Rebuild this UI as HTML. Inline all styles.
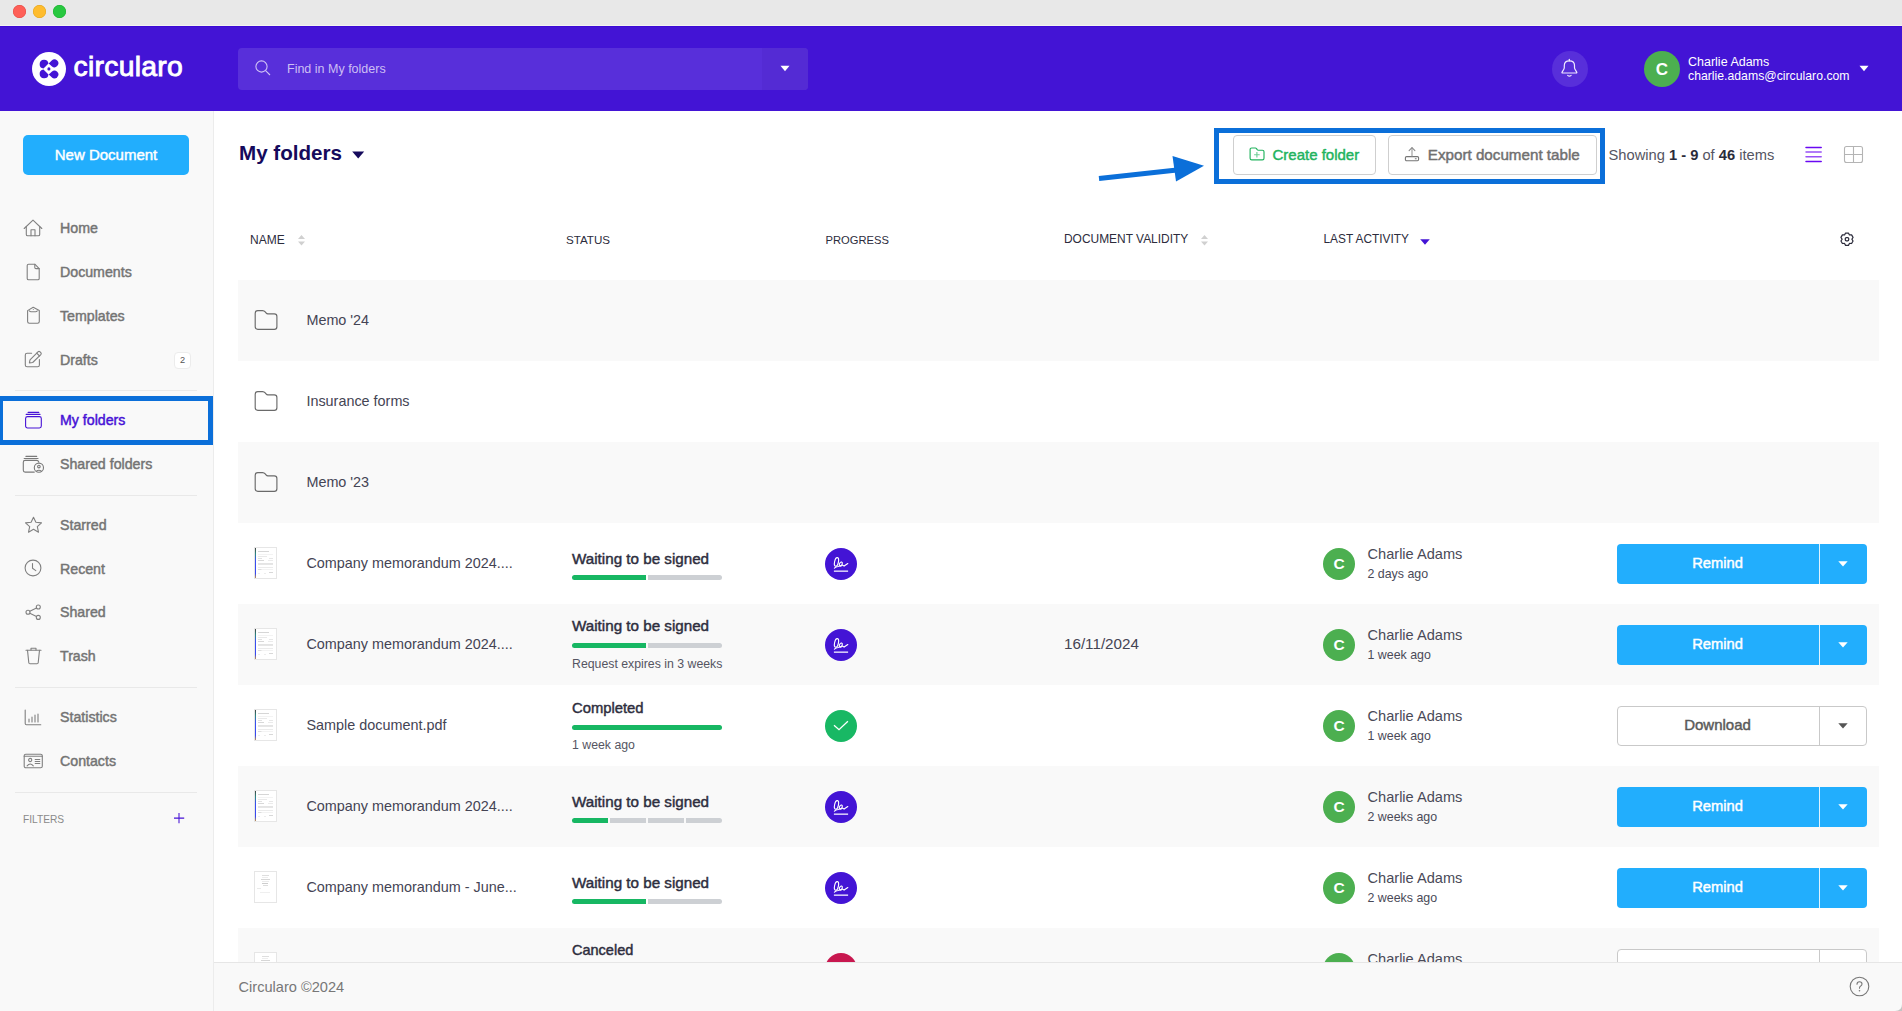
<!DOCTYPE html>
<html><head><meta charset="utf-8"><title>Circularo</title><style>*{margin:0;padding:0}
html,body{width:1902px;height:1011px;overflow:hidden;background:#fff;font-family:"Liberation Sans",sans-serif}
.r{position:absolute;display:block}
.t{position:absolute;white-space:nowrap}
b{font-weight:700}</style></head><body>
<div class="r" style="left:214px;top:111px;width:1688px;height:851px;background:#fff"></div>
<div class="t " style="left:239px;top:142.56px;font-size:20.6px;line-height:20.6px;color:#150a5c;font-weight:700;">My folders</div>
<svg class="r" style="left:352px;top:150.6px;" width="12.5" height="8" viewBox="0 0 12.5 8"><path d="M0.2 0.4 L12.2 0.4 L6.2 7.4 Z" fill="#150a5c"/></svg>
<svg class="r" style="left:1095px;top:150px;" width="115" height="36" viewBox="0 0 115 36"><line x1="4" y1="28.5" x2="82" y2="20" stroke="#0b6fd9" stroke-width="5"/><path d="M77.5 6 L109 15.7 L81 31.5 Z" fill="#0b6fd9"/></svg>
<div class="r" style="left:1233px;top:135px;width:143px;height:40px;border:1px solid #cfcfcf;border-radius:4px;box-sizing:border-box;background:#fff"></div>
<svg class="r" style="left:1249px;top:147px;" width="16" height="15" viewBox="0 0 16 15"><g fill="none" stroke="#22b35e" stroke-width="1.15" stroke-linejoin="round"><path d="M1.1 2.6 Q1.1 1 2.7 1 H6.4 Q7 1 7.5 1.6 L8 2.4 Q8.6 3.2 9.3 3.2 H13.4 Q15 3.2 15 4.8 V11.2 Q15 12.8 13.4 12.8 H2.7 Q1.1 12.8 1.1 11.2 Z"/><path d="M7.9 4.9 V10.5 M5.1 7.7 H10.7" stroke="#6fcf98"/></g></svg>
<div class="t " style="left:1272.5px;top:146.90px;font-size:15px;line-height:15px;color:#22b35e;font-weight:400;-webkit-text-stroke:0.45px #22b35e;">Create folder</div>
<div class="r" style="left:1388px;top:135px;width:209px;height:40px;border:1px solid #cfcfcf;border-radius:4px;box-sizing:border-box;background:#fff"></div>
<svg class="r" style="left:1403px;top:146px;" width="17" height="16" viewBox="0 0 17 16"><g fill="none" stroke="#757575" stroke-width="1.1" stroke-linejoin="round" stroke-linecap="round"><rect x="2.4" y="10.6" width="13.2" height="4.2" rx="1.2"/><path d="M9 1.8 V10" stroke="#9a9a9a"/><path d="M6.1 4.6 L9 1.7 L11.9 4.6" stroke="#8a8a8a"/><path d="M12.3 12.7 H13.2"/></g></svg>
<div class="t " style="left:1427.8px;top:146.73px;font-size:15.2px;line-height:15.2px;color:#707070;font-weight:400;-webkit-text-stroke:0.45px #707070;">Export document table</div>
<div class="r" style="left:1214px;top:128px;width:391px;height:56px;border:5px solid #0b6fd9;box-sizing:border-box"></div>
<div class="t " style="left:1608.5px;top:147.96px;font-size:14.7px;line-height:14.7px;color:#555562;font-weight:400;">Showing <b style="color:#2b2b3a">1 - 9</b> of <b style="color:#2b2b3a">46</b> items</div>
<svg class="r" style="left:1804px;top:145px;" width="19" height="19" viewBox="0 0 19 19"><g stroke-width="1.5" stroke-linecap="round"><path d="M2 2.4 H17.2 M2 16.6 H17.2" stroke="#6a08f2"/><path d="M2 7.1 H17.2 M2 11.8 H17.2" stroke="#9850f6"/></g></svg>
<svg class="r" style="left:1843px;top:145px;" width="21" height="19" viewBox="0 0 21 19"><g fill="none" stroke="#b4b4b4" stroke-width="1.1"><rect x="1.5" y="1.5" width="18" height="16" rx="2"/><path d="M10.5 1.5 V17.5 M1.5 9.5 H19.5"/></g></svg>
<div class="t " style="left:250px;top:234.04px;font-size:12px;line-height:12px;color:#2c2c3c;font-weight:400;">NAME</div>
<div class="t " style="left:566px;top:234.38px;font-size:11.6px;line-height:11.6px;color:#2c2c3c;font-weight:400;">STATUS</div>
<div class="t " style="left:825.5px;top:234.72px;font-size:11.2px;line-height:11.2px;color:#2c2c3c;font-weight:400;">PROGRESS</div>
<div class="t " style="left:1064px;top:234.08px;font-size:11.95px;line-height:11.95px;color:#2c2c3c;font-weight:400;">DOCUMENT VALIDITY</div>
<div class="t " style="left:1323.5px;top:234.17px;font-size:11.85px;line-height:11.85px;color:#2c2c3c;font-weight:400;">LAST ACTIVITY</div>
<svg class="r" style="left:296.5px;top:233.5px;" width="9" height="13" viewBox="0 0 9 13"><path d="M1 5 L4.5 1 L8 5 Z M1 7.5 L8 7.5 L4.5 11.5 Z" fill="#d0d0d0"/></svg>
<svg class="r" style="left:1199.5px;top:233.5px;" width="9" height="13" viewBox="0 0 9 13"><path d="M1 5 L4.5 1 L8 5 Z M1 7.5 L8 7.5 L4.5 11.5 Z" fill="#d0d0d0"/></svg>
<svg class="r" style="left:1420px;top:239px;" width="10" height="6" viewBox="0 0 10 6"><path d="M0.2 0.3 L9.8 0.3 L5 5.8 Z" fill="#4314d5"/></svg>
<svg class="r" style="left:1840px;top:232px;" width="14" height="15" viewBox="0 0 14 15"><g fill="none" stroke="#2c2c3c" stroke-width="1.25" stroke-linejoin="round"><path d="M4.55 2.96 L5.58 1.06 L8.42 1.06 L9.45 2.96 L11.61 2.90 L13.02 5.36 L11.90 7.20 L13.02 9.04 L11.61 11.50 L9.45 11.44 L8.42 13.34 L5.58 13.34 L4.55 11.44 L2.39 11.50 L0.98 9.04 L2.10 7.20 L0.98 5.36 L2.39 2.90 Z"/><rect x="5.3" y="5.5" width="3.4" height="3.4" rx="1.1"/></g></svg>
<div class="r" style="left:238px;top:280px;width:1641px;height:81px;background:#f9f9f9"></div>
<div class="r" style="left:238px;top:442px;width:1641px;height:81px;background:#f9f9f9"></div>
<div class="r" style="left:238px;top:604px;width:1641px;height:81px;background:#f9f9f9"></div>
<div class="r" style="left:238px;top:766px;width:1641px;height:81px;background:#f9f9f9"></div>
<div class="r" style="left:238px;top:928px;width:1641px;height:81px;background:#f9f9f9"></div>
<svg class="r" style="left:254px;top:309.0px;" width="24" height="22" viewBox="0 0 24 22"><path d="M1.2 4.2 Q1.2 1.6 3.8 1.6 H8.6 Q10.2 1.6 11.2 2.9 L12 3.9 Q12.8 4.9 14 4.9 H20.3 Q22.9 4.9 22.9 7.5 V17.7 Q22.9 20.3 20.3 20.3 H3.8 Q1.2 20.3 1.2 17.7 Z" fill="none" stroke="#6a6a6a" stroke-width="1.15" stroke-linejoin="round"/></svg>
<div class="t " style="left:306.4px;top:313.11px;font-size:14.4px;line-height:14.4px;color:#444454;font-weight:400;">Memo '24</div>
<svg class="r" style="left:254px;top:390.0px;" width="24" height="22" viewBox="0 0 24 22"><path d="M1.2 4.2 Q1.2 1.6 3.8 1.6 H8.6 Q10.2 1.6 11.2 2.9 L12 3.9 Q12.8 4.9 14 4.9 H20.3 Q22.9 4.9 22.9 7.5 V17.7 Q22.9 20.3 20.3 20.3 H3.8 Q1.2 20.3 1.2 17.7 Z" fill="none" stroke="#6a6a6a" stroke-width="1.15" stroke-linejoin="round"/></svg>
<div class="t " style="left:306.4px;top:394.11px;font-size:14.4px;line-height:14.4px;color:#444454;font-weight:400;">Insurance forms</div>
<svg class="r" style="left:254px;top:471.0px;" width="24" height="22" viewBox="0 0 24 22"><path d="M1.2 4.2 Q1.2 1.6 3.8 1.6 H8.6 Q10.2 1.6 11.2 2.9 L12 3.9 Q12.8 4.9 14 4.9 H20.3 Q22.9 4.9 22.9 7.5 V17.7 Q22.9 20.3 20.3 20.3 H3.8 Q1.2 20.3 1.2 17.7 Z" fill="none" stroke="#6a6a6a" stroke-width="1.15" stroke-linejoin="round"/></svg>
<div class="t " style="left:306.4px;top:475.11px;font-size:14.4px;line-height:14.4px;color:#444454;font-weight:400;">Memo '23</div>
<div class="r" style="left:254px;top:547.0px;width:23px;height:32px;background:#fff;border:1px solid #e6e6e6;box-sizing:border-box"></div>
<div class="r" style="left:254.6px;top:548.0px;width:1.1px;height:30px;background:linear-gradient(#444,#2a8a80 20%,#3850f0 40%,#3848f0 85%,#c09050)"></div>
<div class="r" style="left:258px;top:550.5px;width:11px;height:0.9px;background:#c4c4c4;opacity:0.7"></div>
<div class="r" style="left:258px;top:553.8px;width:15px;height:0.5px;background:#eee;opacity:0.7"></div>
<div class="r" style="left:258px;top:555.5px;width:9px;height:0.6px;background:#e0e0e0;opacity:0.7"></div>
<div class="r" style="left:258px;top:557.8px;width:4px;height:0.7px;background:#d4d4d4;opacity:0.7"></div>
<div class="r" style="left:269px;top:557.5px;width:4px;height:0.7px;background:#ddd;opacity:0.7"></div>
<div class="r" style="left:258px;top:559.8px;width:6px;height:0.8px;background:#c8c8c8;opacity:0.7"></div>
<div class="r" style="left:268px;top:560.2px;width:5px;height:0.5px;background:#e2e2e2;opacity:0.7"></div>
<div class="r" style="left:258px;top:562.8px;width:15px;height:0.7px;background:#d8d8d8;opacity:0.7"></div>
<div class="r" style="left:258px;top:564.3px;width:15px;height:0.7px;background:#dcdcdc;opacity:0.7"></div>
<div class="r" style="left:258px;top:566.5px;width:15px;height:0.6px;background:#e2e2e2;opacity:0.7"></div>
<div class="r" style="left:258px;top:568.8px;width:4px;height:0.8px;background:#cfcfcf;opacity:0.7"></div>
<div class="r" style="left:261px;top:569.3px;width:12px;height:0.4px;background:#eee;opacity:0.7"></div>
<div class="r" style="left:258px;top:572.5px;width:2px;height:0.5px;background:#e6e6e6;opacity:0.7"></div>
<div class="r" style="left:264px;top:572.5px;width:2px;height:0.5px;background:#e6e6e6;opacity:0.7"></div>
<div class="r" style="left:269px;top:571.8px;width:4px;height:0.7px;background:#c8c8c8;opacity:0.7"></div>
<div class="t " style="left:306.4px;top:555.71px;font-size:14.4px;line-height:14.4px;color:#444454;font-weight:400;">Company memorandum 2024....</div>
<div class="t " style="left:572px;top:550.93px;font-size:15.2px;line-height:15.2px;color:#2e2e3e;font-weight:400;-webkit-text-stroke:0.45px #2e2e3e;">Waiting to be signed</div>
<div class="r" style="left:572.0px;top:575.0px;width:74.0px;height:5px;background:#17b763;border-radius:3px 0 0 3px"></div>
<div class="r" style="left:648.0px;top:575.0px;width:74.0px;height:5px;background:#cdd0d4;border-radius:0 3px 3px 0"></div>
<svg class="r" style="left:825px;top:547.5px;" width="32" height="32" viewBox="0 0 32 32"><circle cx="16" cy="16" r="16" fill="#4314d5"/><g fill="none" stroke="#fff" stroke-width="1.15" stroke-linecap="round" stroke-linejoin="round"><ellipse cx="11.5" cy="13.9" rx="1.9" ry="4.4" transform="rotate(12 11.5 13.9)"/><path d="M9.4 20.1 Q11 18.7 13 18.5 Q14.6 18.3 15.9 17.6"/><ellipse cx="15.8" cy="16.1" rx="1.3" ry="2.2" transform="rotate(25 15.8 16.1)"/><path d="M17.1 16.9 L19.1 18.1 L22.8 15.6"/></g><rect x="8.9" y="22.5" width="14.2" height="1.3" fill="#f4f1ff"/></svg>
<div class="r" style="left:1323px;top:547.5px;width:32px;height:32px;background:#4caf50;border-radius:50%"></div>
<div class="t" style="left:1323.0px;width:32px;text-align:center;top:556.38px;font-size:15.5px;line-height:15.5px;color:#fff;font-weight:700;">C</div>
<div class="t " style="left:1367.5px;top:547.14px;font-size:14.6px;line-height:14.6px;color:#4a4a58;font-weight:400;">Charlie Adams</div>
<div class="t " style="left:1367.5px;top:568.10px;font-size:12.4px;line-height:12.4px;color:#4a4a58;font-weight:400;">2 days ago</div>
<div class="r" style="left:1617px;top:544.0px;width:250px;height:40px;background:#22aefd;border-radius:4px"></div>
<div class="r" style="left:1819px;top:544.0px;width:1px;height:40px;background:#fff;opacity:0.85"></div>
<div class="t" style="left:1617.5px;width:200px;text-align:center;top:555.66px;font-size:14.7px;line-height:14.7px;color:#fff;font-weight:400;-webkit-text-stroke:0.45px #fff;">Remind</div>
<svg class="r" style="left:1838px;top:560.5px;" width="10" height="6" viewBox="0 0 10 6"><path d="M0.3 0.3 L9.7 0.3 L5 5.5 Z" fill="#fff"/></svg>
<div class="r" style="left:254px;top:628.0px;width:23px;height:32px;background:#fff;border:1px solid #e6e6e6;box-sizing:border-box"></div>
<div class="r" style="left:254.6px;top:629.0px;width:1.1px;height:30px;background:linear-gradient(#444,#2a8a80 20%,#3850f0 40%,#3848f0 85%,#c09050)"></div>
<div class="r" style="left:258px;top:631.5px;width:11px;height:0.9px;background:#c4c4c4;opacity:0.7"></div>
<div class="r" style="left:258px;top:634.8px;width:15px;height:0.5px;background:#eee;opacity:0.7"></div>
<div class="r" style="left:258px;top:636.5px;width:9px;height:0.6px;background:#e0e0e0;opacity:0.7"></div>
<div class="r" style="left:258px;top:638.8px;width:4px;height:0.7px;background:#d4d4d4;opacity:0.7"></div>
<div class="r" style="left:269px;top:638.5px;width:4px;height:0.7px;background:#ddd;opacity:0.7"></div>
<div class="r" style="left:258px;top:640.8px;width:6px;height:0.8px;background:#c8c8c8;opacity:0.7"></div>
<div class="r" style="left:268px;top:641.2px;width:5px;height:0.5px;background:#e2e2e2;opacity:0.7"></div>
<div class="r" style="left:258px;top:643.8px;width:15px;height:0.7px;background:#d8d8d8;opacity:0.7"></div>
<div class="r" style="left:258px;top:645.3px;width:15px;height:0.7px;background:#dcdcdc;opacity:0.7"></div>
<div class="r" style="left:258px;top:647.5px;width:15px;height:0.6px;background:#e2e2e2;opacity:0.7"></div>
<div class="r" style="left:258px;top:649.8px;width:4px;height:0.8px;background:#cfcfcf;opacity:0.7"></div>
<div class="r" style="left:261px;top:650.3px;width:12px;height:0.4px;background:#eee;opacity:0.7"></div>
<div class="r" style="left:258px;top:653.5px;width:2px;height:0.5px;background:#e6e6e6;opacity:0.7"></div>
<div class="r" style="left:264px;top:653.5px;width:2px;height:0.5px;background:#e6e6e6;opacity:0.7"></div>
<div class="r" style="left:269px;top:652.8px;width:4px;height:0.7px;background:#c8c8c8;opacity:0.7"></div>
<div class="t " style="left:306.4px;top:636.71px;font-size:14.4px;line-height:14.4px;color:#444454;font-weight:400;">Company memorandum 2024....</div>
<div class="t " style="left:572px;top:617.93px;font-size:15.2px;line-height:15.2px;color:#2e2e3e;font-weight:400;-webkit-text-stroke:0.45px #2e2e3e;">Waiting to be signed</div>
<div class="r" style="left:572.0px;top:643.3px;width:74.0px;height:5px;background:#17b763;border-radius:3px 0 0 3px"></div>
<div class="r" style="left:648.0px;top:643.3px;width:74.0px;height:5px;background:#cdd0d4;border-radius:0 3px 3px 0"></div>
<div class="t " style="left:572px;top:657.59px;font-size:12.3px;line-height:12.3px;color:#555562;font-weight:400;">Request expires in 3 weeks</div>
<svg class="r" style="left:825px;top:628.5px;" width="32" height="32" viewBox="0 0 32 32"><circle cx="16" cy="16" r="16" fill="#4314d5"/><g fill="none" stroke="#fff" stroke-width="1.15" stroke-linecap="round" stroke-linejoin="round"><ellipse cx="11.5" cy="13.9" rx="1.9" ry="4.4" transform="rotate(12 11.5 13.9)"/><path d="M9.4 20.1 Q11 18.7 13 18.5 Q14.6 18.3 15.9 17.6"/><ellipse cx="15.8" cy="16.1" rx="1.3" ry="2.2" transform="rotate(25 15.8 16.1)"/><path d="M17.1 16.9 L19.1 18.1 L22.8 15.6"/></g><rect x="8.9" y="22.5" width="14.2" height="1.3" fill="#f4f1ff"/></svg>
<div class="t " style="left:1064px;top:635.53px;font-size:15.2px;line-height:15.2px;color:#444454;font-weight:400;">16/11/2024</div>
<div class="r" style="left:1323px;top:628.5px;width:32px;height:32px;background:#4caf50;border-radius:50%"></div>
<div class="t" style="left:1323.0px;width:32px;text-align:center;top:637.38px;font-size:15.5px;line-height:15.5px;color:#fff;font-weight:700;">C</div>
<div class="t " style="left:1367.5px;top:628.14px;font-size:14.6px;line-height:14.6px;color:#4a4a58;font-weight:400;">Charlie Adams</div>
<div class="t " style="left:1367.5px;top:649.10px;font-size:12.4px;line-height:12.4px;color:#4a4a58;font-weight:400;">1 week ago</div>
<div class="r" style="left:1617px;top:625.0px;width:250px;height:40px;background:#22aefd;border-radius:4px"></div>
<div class="r" style="left:1819px;top:625.0px;width:1px;height:40px;background:#fff;opacity:0.85"></div>
<div class="t" style="left:1617.5px;width:200px;text-align:center;top:636.66px;font-size:14.7px;line-height:14.7px;color:#fff;font-weight:400;-webkit-text-stroke:0.45px #fff;">Remind</div>
<svg class="r" style="left:1838px;top:641.5px;" width="10" height="6" viewBox="0 0 10 6"><path d="M0.3 0.3 L9.7 0.3 L5 5.5 Z" fill="#fff"/></svg>
<div class="r" style="left:254px;top:709.0px;width:23px;height:32px;background:#fff;border:1px solid #e6e6e6;box-sizing:border-box"></div>
<div class="r" style="left:254.6px;top:710.0px;width:1.1px;height:30px;background:linear-gradient(#444,#2a8a80 20%,#3850f0 40%,#3848f0 85%,#c09050)"></div>
<div class="r" style="left:258px;top:712.5px;width:11px;height:0.9px;background:#c4c4c4;opacity:0.7"></div>
<div class="r" style="left:258px;top:715.8px;width:15px;height:0.5px;background:#eee;opacity:0.7"></div>
<div class="r" style="left:258px;top:717.5px;width:9px;height:0.6px;background:#e0e0e0;opacity:0.7"></div>
<div class="r" style="left:258px;top:719.8px;width:4px;height:0.7px;background:#d4d4d4;opacity:0.7"></div>
<div class="r" style="left:269px;top:719.5px;width:4px;height:0.7px;background:#ddd;opacity:0.7"></div>
<div class="r" style="left:258px;top:721.8px;width:6px;height:0.8px;background:#c8c8c8;opacity:0.7"></div>
<div class="r" style="left:268px;top:722.2px;width:5px;height:0.5px;background:#e2e2e2;opacity:0.7"></div>
<div class="r" style="left:258px;top:724.8px;width:15px;height:0.7px;background:#d8d8d8;opacity:0.7"></div>
<div class="r" style="left:258px;top:726.3px;width:15px;height:0.7px;background:#dcdcdc;opacity:0.7"></div>
<div class="r" style="left:258px;top:728.5px;width:15px;height:0.6px;background:#e2e2e2;opacity:0.7"></div>
<div class="r" style="left:258px;top:730.8px;width:4px;height:0.8px;background:#cfcfcf;opacity:0.7"></div>
<div class="r" style="left:261px;top:731.3px;width:12px;height:0.4px;background:#eee;opacity:0.7"></div>
<div class="r" style="left:258px;top:734.5px;width:2px;height:0.5px;background:#e6e6e6;opacity:0.7"></div>
<div class="r" style="left:264px;top:734.5px;width:2px;height:0.5px;background:#e6e6e6;opacity:0.7"></div>
<div class="r" style="left:269px;top:733.8px;width:4px;height:0.7px;background:#c8c8c8;opacity:0.7"></div>
<div class="t " style="left:306.4px;top:717.71px;font-size:14.4px;line-height:14.4px;color:#444454;font-weight:400;">Sample document.pdf</div>
<div class="t " style="left:572px;top:700.77px;font-size:14.8px;line-height:14.8px;color:#2e2e3e;font-weight:400;-webkit-text-stroke:0.45px #2e2e3e;">Completed</div>
<div class="r" style="left:572px;top:725.0px;width:150px;height:5px;background:#17b763;border-radius:3px"></div>
<div class="t " style="left:572px;top:738.59px;font-size:12.3px;line-height:12.3px;color:#555562;font-weight:400;">1 week ago</div>
<svg class="r" style="left:825px;top:709.5px;" width="32" height="32" viewBox="0 0 32 32"><circle cx="16" cy="16" r="16" fill="#18b864"/><path d="M9 15.2 L14 19.7 L22.9 11.3" fill="none" stroke="#fff" stroke-width="1.3"/></svg>
<div class="r" style="left:1323px;top:709.5px;width:32px;height:32px;background:#4caf50;border-radius:50%"></div>
<div class="t" style="left:1323.0px;width:32px;text-align:center;top:718.38px;font-size:15.5px;line-height:15.5px;color:#fff;font-weight:700;">C</div>
<div class="t " style="left:1367.5px;top:709.14px;font-size:14.6px;line-height:14.6px;color:#4a4a58;font-weight:400;">Charlie Adams</div>
<div class="t " style="left:1367.5px;top:730.10px;font-size:12.4px;line-height:12.4px;color:#4a4a58;font-weight:400;">1 week ago</div>
<div class="r" style="left:1617px;top:706.0px;width:250px;height:40px;background:#fff;border:1px solid #c9c9c9;border-radius:4px;box-sizing:border-box"></div>
<div class="r" style="left:1819px;top:706.0px;width:1px;height:40px;background:#c9c9c9"></div>
<div class="t" style="left:1617.5px;width:200px;text-align:center;top:717.40px;font-size:15px;line-height:15px;color:#5a5a5a;font-weight:400;-webkit-text-stroke:0.45px #5a5a5a;">Download</div>
<svg class="r" style="left:1838px;top:722.5px;" width="10" height="6" viewBox="0 0 10 6"><path d="M0.3 0.3 L9.7 0.3 L5 5.5 Z" fill="#555"/></svg>
<div class="r" style="left:254px;top:790.0px;width:23px;height:32px;background:#fff;border:1px solid #e6e6e6;box-sizing:border-box"></div>
<div class="r" style="left:254.6px;top:791.0px;width:1.1px;height:30px;background:linear-gradient(#444,#2a8a80 20%,#3850f0 40%,#3848f0 85%,#c09050)"></div>
<div class="r" style="left:258px;top:793.5px;width:11px;height:0.9px;background:#c4c4c4;opacity:0.7"></div>
<div class="r" style="left:258px;top:796.8px;width:15px;height:0.5px;background:#eee;opacity:0.7"></div>
<div class="r" style="left:258px;top:798.5px;width:9px;height:0.6px;background:#e0e0e0;opacity:0.7"></div>
<div class="r" style="left:258px;top:800.8px;width:4px;height:0.7px;background:#d4d4d4;opacity:0.7"></div>
<div class="r" style="left:269px;top:800.5px;width:4px;height:0.7px;background:#ddd;opacity:0.7"></div>
<div class="r" style="left:258px;top:802.8px;width:6px;height:0.8px;background:#c8c8c8;opacity:0.7"></div>
<div class="r" style="left:268px;top:803.2px;width:5px;height:0.5px;background:#e2e2e2;opacity:0.7"></div>
<div class="r" style="left:258px;top:805.8px;width:15px;height:0.7px;background:#d8d8d8;opacity:0.7"></div>
<div class="r" style="left:258px;top:807.3px;width:15px;height:0.7px;background:#dcdcdc;opacity:0.7"></div>
<div class="r" style="left:258px;top:809.5px;width:15px;height:0.6px;background:#e2e2e2;opacity:0.7"></div>
<div class="r" style="left:258px;top:811.8px;width:4px;height:0.8px;background:#cfcfcf;opacity:0.7"></div>
<div class="r" style="left:261px;top:812.3px;width:12px;height:0.4px;background:#eee;opacity:0.7"></div>
<div class="r" style="left:258px;top:815.5px;width:2px;height:0.5px;background:#e6e6e6;opacity:0.7"></div>
<div class="r" style="left:264px;top:815.5px;width:2px;height:0.5px;background:#e6e6e6;opacity:0.7"></div>
<div class="r" style="left:269px;top:814.8px;width:4px;height:0.7px;background:#c8c8c8;opacity:0.7"></div>
<div class="t " style="left:306.4px;top:798.71px;font-size:14.4px;line-height:14.4px;color:#444454;font-weight:400;">Company memorandum 2024....</div>
<div class="t " style="left:572px;top:793.93px;font-size:15.2px;line-height:15.2px;color:#2e2e3e;font-weight:400;-webkit-text-stroke:0.45px #2e2e3e;">Waiting to be signed</div>
<div class="r" style="left:572.0px;top:818.0px;width:35.62px;height:5px;background:#17b763;border-radius:3px 0 0 3px"></div>
<div class="r" style="left:610.12px;top:818.0px;width:35.62px;height:5px;background:#cdd0d4;border-radius:0"></div>
<div class="r" style="left:648.25px;top:818.0px;width:35.62px;height:5px;background:#cdd0d4;border-radius:0"></div>
<div class="r" style="left:686.38px;top:818.0px;width:35.62px;height:5px;background:#cdd0d4;border-radius:0 3px 3px 0"></div>
<svg class="r" style="left:825px;top:790.5px;" width="32" height="32" viewBox="0 0 32 32"><circle cx="16" cy="16" r="16" fill="#4314d5"/><g fill="none" stroke="#fff" stroke-width="1.15" stroke-linecap="round" stroke-linejoin="round"><ellipse cx="11.5" cy="13.9" rx="1.9" ry="4.4" transform="rotate(12 11.5 13.9)"/><path d="M9.4 20.1 Q11 18.7 13 18.5 Q14.6 18.3 15.9 17.6"/><ellipse cx="15.8" cy="16.1" rx="1.3" ry="2.2" transform="rotate(25 15.8 16.1)"/><path d="M17.1 16.9 L19.1 18.1 L22.8 15.6"/></g><rect x="8.9" y="22.5" width="14.2" height="1.3" fill="#f4f1ff"/></svg>
<div class="r" style="left:1323px;top:790.5px;width:32px;height:32px;background:#4caf50;border-radius:50%"></div>
<div class="t" style="left:1323.0px;width:32px;text-align:center;top:799.38px;font-size:15.5px;line-height:15.5px;color:#fff;font-weight:700;">C</div>
<div class="t " style="left:1367.5px;top:790.14px;font-size:14.6px;line-height:14.6px;color:#4a4a58;font-weight:400;">Charlie Adams</div>
<div class="t " style="left:1367.5px;top:811.10px;font-size:12.4px;line-height:12.4px;color:#4a4a58;font-weight:400;">2 weeks ago</div>
<div class="r" style="left:1617px;top:787.0px;width:250px;height:40px;background:#22aefd;border-radius:4px"></div>
<div class="r" style="left:1819px;top:787.0px;width:1px;height:40px;background:#fff;opacity:0.85"></div>
<div class="t" style="left:1617.5px;width:200px;text-align:center;top:798.66px;font-size:14.7px;line-height:14.7px;color:#fff;font-weight:400;-webkit-text-stroke:0.45px #fff;">Remind</div>
<svg class="r" style="left:1838px;top:803.5px;" width="10" height="6" viewBox="0 0 10 6"><path d="M0.3 0.3 L9.7 0.3 L5 5.5 Z" fill="#fff"/></svg>
<div class="r" style="left:254px;top:871.0px;width:23px;height:32px;background:#fff;border:1px solid #e6e6e6;box-sizing:border-box"></div>
<div class="r" style="left:261.5px;top:874.5px;width:7px;height:0.8px;background:#d0d0d0;opacity:0.7"></div>
<div class="r" style="left:262px;top:877.3px;width:6px;height:0.5px;background:#e6e6e6;opacity:0.7"></div>
<div class="r" style="left:261px;top:879.4px;width:9px;height:0.9px;background:#c4c4c4;opacity:0.7"></div>
<div class="r" style="left:262px;top:881.1px;width:7px;height:0.5px;background:#e2e2e2;opacity:0.7"></div>
<div class="r" style="left:262px;top:883.2px;width:6px;height:1px;background:#b8b8b8;opacity:0.7"></div>
<div class="r" style="left:262.5px;top:885.2px;width:5px;height:0.7px;background:#cfcfcf;opacity:0.7"></div>
<div class="r" style="left:256.8px;top:887.5px;width:4px;height:0.5px;background:#e0e0e0;opacity:0.7"></div>
<div class="r" style="left:260px;top:891.5px;width:10px;height:0.5px;background:#e8e8e8;opacity:0.7"></div>
<div class="t " style="left:306.4px;top:879.71px;font-size:14.4px;line-height:14.4px;color:#444454;font-weight:400;">Company memorandum - June...</div>
<div class="t " style="left:572px;top:874.93px;font-size:15.2px;line-height:15.2px;color:#2e2e3e;font-weight:400;-webkit-text-stroke:0.45px #2e2e3e;">Waiting to be signed</div>
<div class="r" style="left:572.0px;top:899.0px;width:74.0px;height:5px;background:#17b763;border-radius:3px 0 0 3px"></div>
<div class="r" style="left:648.0px;top:899.0px;width:74.0px;height:5px;background:#cdd0d4;border-radius:0 3px 3px 0"></div>
<svg class="r" style="left:825px;top:871.5px;" width="32" height="32" viewBox="0 0 32 32"><circle cx="16" cy="16" r="16" fill="#4314d5"/><g fill="none" stroke="#fff" stroke-width="1.15" stroke-linecap="round" stroke-linejoin="round"><ellipse cx="11.5" cy="13.9" rx="1.9" ry="4.4" transform="rotate(12 11.5 13.9)"/><path d="M9.4 20.1 Q11 18.7 13 18.5 Q14.6 18.3 15.9 17.6"/><ellipse cx="15.8" cy="16.1" rx="1.3" ry="2.2" transform="rotate(25 15.8 16.1)"/><path d="M17.1 16.9 L19.1 18.1 L22.8 15.6"/></g><rect x="8.9" y="22.5" width="14.2" height="1.3" fill="#f4f1ff"/></svg>
<div class="r" style="left:1323px;top:871.5px;width:32px;height:32px;background:#4caf50;border-radius:50%"></div>
<div class="t" style="left:1323.0px;width:32px;text-align:center;top:880.38px;font-size:15.5px;line-height:15.5px;color:#fff;font-weight:700;">C</div>
<div class="t " style="left:1367.5px;top:871.14px;font-size:14.6px;line-height:14.6px;color:#4a4a58;font-weight:400;">Charlie Adams</div>
<div class="t " style="left:1367.5px;top:892.10px;font-size:12.4px;line-height:12.4px;color:#4a4a58;font-weight:400;">2 weeks ago</div>
<div class="r" style="left:1617px;top:868.0px;width:250px;height:40px;background:#22aefd;border-radius:4px"></div>
<div class="r" style="left:1819px;top:868.0px;width:1px;height:40px;background:#fff;opacity:0.85"></div>
<div class="t" style="left:1617.5px;width:200px;text-align:center;top:879.66px;font-size:14.7px;line-height:14.7px;color:#fff;font-weight:400;-webkit-text-stroke:0.45px #fff;">Remind</div>
<svg class="r" style="left:1838px;top:884.5px;" width="10" height="6" viewBox="0 0 10 6"><path d="M0.3 0.3 L9.7 0.3 L5 5.5 Z" fill="#fff"/></svg>
<div class="r" style="left:254px;top:952.0px;width:23px;height:32px;background:#fff;border:1px solid #e6e6e6;box-sizing:border-box"></div>
<div class="r" style="left:261.5px;top:955.5px;width:7px;height:0.8px;background:#d0d0d0;opacity:0.7"></div>
<div class="r" style="left:262px;top:958.3px;width:6px;height:0.5px;background:#e6e6e6;opacity:0.7"></div>
<div class="r" style="left:261px;top:960.4px;width:9px;height:0.9px;background:#c4c4c4;opacity:0.7"></div>
<div class="r" style="left:262px;top:962.1px;width:7px;height:0.5px;background:#e2e2e2;opacity:0.7"></div>
<div class="r" style="left:262px;top:964.2px;width:6px;height:1px;background:#b8b8b8;opacity:0.7"></div>
<div class="r" style="left:262.5px;top:966.2px;width:5px;height:0.7px;background:#cfcfcf;opacity:0.7"></div>
<div class="r" style="left:256.8px;top:968.5px;width:4px;height:0.5px;background:#e0e0e0;opacity:0.7"></div>
<div class="r" style="left:260px;top:972.5px;width:10px;height:0.5px;background:#e8e8e8;opacity:0.7"></div>
<div class="t " style="left:572px;top:942.93px;font-size:14.5px;line-height:14.5px;color:#2e2e3e;font-weight:400;-webkit-text-stroke:0.45px #2e2e3e;">Canceled</div>
<div class="r" style="left:825px;top:952.5px;width:32px;height:32px;background:#c8174f;border-radius:50%"></div>
<div class="r" style="left:1323px;top:952.5px;width:32px;height:32px;background:#4caf50;border-radius:50%"></div>
<div class="t " style="left:1367.5px;top:952.14px;font-size:14.6px;line-height:14.6px;color:#4a4a58;font-weight:400;">Charlie Adams</div>
<div class="r" style="left:1617px;top:949.0px;width:250px;height:40px;background:#fff;border:1px solid #c9c9c9;border-radius:4px;box-sizing:border-box"></div>
<div class="r" style="left:1819px;top:949.0px;width:1px;height:40px;background:#c9c9c9"></div>
<div class="r" style="left:214px;top:962px;width:1688px;height:49px;background:#f9f9f9;border-top:1px solid #e6e6e6;box-sizing:border-box"></div>
<div class="t " style="left:238.5px;top:979.64px;font-size:14.6px;line-height:14.6px;color:#777;font-weight:400;">Circularo ©2024</div>
<svg class="r" style="left:1849px;top:976px;" width="21" height="21" viewBox="0 0 21 21"><circle cx="10.5" cy="10.5" r="9.3" fill="none" stroke="#777" stroke-width="1.1"/><path d="M8 8.3 Q8 5.8 10.5 5.8 Q13 5.8 13 8.1 Q13 9.6 11.4 10.3 Q10.5 10.8 10.5 12.2" fill="none" stroke="#777" stroke-width="1.1" stroke-linecap="round"/><circle cx="10.5" cy="14.8" r="0.8" fill="#777"/></svg>
<svg class="r" style="left:0px;top:1004px;" width="7" height="7" viewBox="0 0 7 7"><path d="M0 0 V7 H7 Q0 7 0 0 Z" fill="#c4c4c4"/></svg>
<svg class="r" style="left:1895px;top:1004px;transform:scaleX(-1)" width="7" height="7" viewBox="0 0 7 7"><path d="M0 0 V7 H7 Q0 7 0 0 Z" fill="#c4c4c4"/></svg>
<div class="r" style="left:0px;top:111px;width:213px;height:900px;background:#f9f9f9"></div>
<div class="r" style="left:213px;top:111px;width:1px;height:900px;background:#ececec"></div>
<div class="r" style="left:23px;top:135px;width:166px;height:40px;background:#22aefd;border-radius:5px"></div>
<div class="t" style="left:23.0px;width:166px;text-align:center;top:147.30px;font-size:15px;line-height:15px;color:#fff;font-weight:400;-webkit-text-stroke:0.45px #fff;">New Document</div>
<div class="t " style="left:60px;top:221.28px;font-size:14.2px;line-height:14.2px;color:#747474;font-weight:400;-webkit-text-stroke:0.45px #747474;">Home</div>
<div class="t " style="left:60px;top:265.28px;font-size:14.2px;line-height:14.2px;color:#747474;font-weight:400;-webkit-text-stroke:0.45px #747474;">Documents</div>
<div class="t " style="left:60px;top:309.28px;font-size:14.2px;line-height:14.2px;color:#747474;font-weight:400;-webkit-text-stroke:0.45px #747474;">Templates</div>
<div class="t " style="left:60px;top:352.78px;font-size:14.2px;line-height:14.2px;color:#747474;font-weight:400;-webkit-text-stroke:0.45px #747474;">Drafts</div>
<div class="t " style="left:60px;top:413.28px;font-size:14.2px;line-height:14.2px;color:#4712d6;font-weight:400;-webkit-text-stroke:0.45px #4712d6;">My folders</div>
<div class="t " style="left:60px;top:457.28px;font-size:14.2px;line-height:14.2px;color:#747474;font-weight:400;-webkit-text-stroke:0.45px #747474;">Shared folders</div>
<div class="t " style="left:60px;top:518.28px;font-size:14.2px;line-height:14.2px;color:#747474;font-weight:400;-webkit-text-stroke:0.45px #747474;">Starred</div>
<div class="t " style="left:60px;top:562.28px;font-size:14.2px;line-height:14.2px;color:#747474;font-weight:400;-webkit-text-stroke:0.45px #747474;">Recent</div>
<div class="t " style="left:60px;top:605.28px;font-size:14.2px;line-height:14.2px;color:#747474;font-weight:400;-webkit-text-stroke:0.45px #747474;">Shared</div>
<div class="t " style="left:60px;top:649.28px;font-size:14.2px;line-height:14.2px;color:#747474;font-weight:400;-webkit-text-stroke:0.45px #747474;">Trash</div>
<div class="t " style="left:60px;top:710.28px;font-size:14.2px;line-height:14.2px;color:#747474;font-weight:400;-webkit-text-stroke:0.45px #747474;">Statistics</div>
<div class="t " style="left:60px;top:754.28px;font-size:14.2px;line-height:14.2px;color:#747474;font-weight:400;-webkit-text-stroke:0.45px #747474;">Contacts</div>
<div class="r" style="left:15px;top:390px;width:182px;height:1px;background:#e9e9e9"></div>
<div class="r" style="left:15px;top:495px;width:182px;height:1px;background:#e9e9e9"></div>
<div class="r" style="left:15px;top:687px;width:182px;height:1px;background:#e9e9e9"></div>
<div class="r" style="left:15px;top:792px;width:182px;height:1px;background:#e9e9e9"></div>
<div class="r" style="left:174px;top:352.3px;width:16.5px;height:16.3px;background:#fff;border:1px solid #ececec;border-radius:4px;box-sizing:border-box"></div>
<div class="t" style="left:174.6px;width:16px;text-align:center;top:356.11px;font-size:9.2px;line-height:9.2px;color:#555;font-weight:400;">2</div>
<div class="t " style="left:23px;top:815.37px;font-size:10.2px;line-height:10.2px;color:#8a8a8a;font-weight:400;">FILTERS</div>
<svg class="r" style="left:173px;top:812px;" width="12" height="12" viewBox="0 0 12 12"><path d="M6 1 V11.2 M1 6.1 H11.2" stroke="#4712d6" stroke-width="1.05"/></svg>
<svg class="r" style="left:23px;top:219px;" width="20" height="18" viewBox="0 0 20 18"><g fill="none" stroke="#808080" stroke-width="1.1" stroke-linecap="round" stroke-linejoin="round"><path d="M1.2 9.5 L10 1.2 L18.8 9.5"/><path d="M3.3 7.5 V15.5 Q3.3 16.8 4.6 16.8 H15.4 Q16.7 16.8 16.7 15.5 V7.5"/><path d="M8 16.8 V10.8 H12 V16.8"/></g></svg>
<svg class="r" style="left:26px;top:263px;" width="15" height="18" viewBox="0 0 15 18"><g fill="none" stroke="#808080" stroke-width="1.1" stroke-linecap="round" stroke-linejoin="round"><path d="M2.5 1.2 H8.8 L13.2 5.6 V15.5 Q13.2 16.8 11.9 16.8 H2.5 Q1.2 16.8 1.2 15.5 V2.5 Q1.2 1.2 2.5 1.2 Z"/><path d="M8.8 1.2 V4.4 Q8.8 5.6 10 5.6 H13.2"/></g></svg>
<svg class="r" style="left:26px;top:306px;" width="15" height="19" viewBox="0 0 15 19"><g fill="none" stroke="#808080" stroke-width="1.1" stroke-linecap="round" stroke-linejoin="round"><path d="M1.6 4.6 L7.2 1.3 L13.3 4.6 V15.6 Q13.3 17.3 11.6 17.3 H3.3 Q1.6 17.3 1.6 15.6 Z"/><path d="M3.4 4.9 Q4 5.7 5 5.7 H9.6 Q10.6 5.7 11.3 4.9"/><circle cx="7.3" cy="3.4" r="0.5" fill="#808080" stroke="none"/></g></svg>
<svg class="r" style="left:24px;top:350px;" width="19" height="18" viewBox="0 0 19 18"><g fill="none" stroke="#808080" stroke-width="1.1" stroke-linecap="round" stroke-linejoin="round"><path d="M7.6 3.3 H3.1 Q1.3 3.3 1.3 5.1 V15 Q1.3 16.8 3.1 16.8 H13.6 Q15.4 16.8 15.4 15 V9.6"/><path d="M5.4 12.9 L6 9.8 L14 1.8 Q15 1 16 1.8 L17 2.8 Q17.6 3.7 16.8 4.6 L8.7 12.5 Z"/><path d="M12.7 3.1 L15.6 6"/></g></svg>
<svg class="r" style="left:24px;top:411px;" width="19" height="19" viewBox="0 0 19 19"><g fill="none" stroke="#4712d6" stroke-width="1.1" stroke-linecap="round" stroke-linejoin="round"><rect x="1.6" y="5.6" width="15.7" height="11.4" rx="1.9"/><path d="M4.1 1.4 H14.8"/><path d="M2.2 3.4 H16"/></g></svg>
<svg class="r" style="left:22px;top:455px;" width="24" height="20" viewBox="0 0 24 20"><g fill="none" stroke="#7a7a7a" stroke-width="1.1" stroke-linecap="round" stroke-linejoin="round"><path d="M12.3 17.1 H3.1 Q1.3 17.1 1.3 15.3 V7.2 Q1.3 5.4 3.1 5.4 H14.6 Q16.3 5.4 16.8 7.2"/><path d="M3.9 1.4 H14.7"/><path d="M2.2 3.5 H16"/><circle cx="16.9" cy="12.7" r="4.6"/><circle cx="16.9" cy="11.6" r="1.3"/><path d="M14.3 16.2 Q16.9 14.2 19.5 16.2"/></g></svg>
<svg class="r" style="left:24px;top:516px;" width="19" height="18" viewBox="0 0 19 18"><g fill="none" stroke="#808080" stroke-width="1.1" stroke-linecap="round" stroke-linejoin="round"><path d="M9.5 1.2 L11.9 6.3 L17.5 6.9 L13.3 10.6 L14.5 16.2 L9.5 13.3 L4.5 16.2 L5.7 10.6 L1.5 6.9 L7.1 6.3 Z"/></g></svg>
<svg class="r" style="left:24px;top:559px;" width="18" height="18" viewBox="0 0 18 18"><g fill="none" stroke="#808080" stroke-width="1.1" stroke-linecap="round" stroke-linejoin="round"><circle cx="9" cy="9" r="7.9"/><path d="M8.5 4.5 V9.3 L11.8 11.6"/></g></svg>
<svg class="r" style="left:25px;top:604px;" width="17" height="16" viewBox="0 0 17 16"><g fill="none" stroke="#808080" stroke-width="1.1" stroke-linecap="round" stroke-linejoin="round"><circle cx="13.3" cy="3" r="2"/><circle cx="13.3" cy="13.4" r="2"/><circle cx="3" cy="8.2" r="2"/><path d="M4.8 7.2 L11.5 4 M4.8 9.2 L11.5 12.4"/></g></svg>
<svg class="r" style="left:25px;top:647px;" width="17" height="18" viewBox="0 0 17 18"><g fill="none" stroke="#808080" stroke-width="1.1" stroke-linecap="round" stroke-linejoin="round"><path d="M1 3.2 H16"/><path d="M6 3 V1.3 H11 V3"/><path d="M2.5 3.2 L3.8 15.8 Q3.9 16.8 5 16.8 H12 Q13.1 16.8 13.2 15.8 L14.5 3.2"/></g></svg>
<svg class="r" style="left:24px;top:708.5px;" width="18" height="17" viewBox="0 0 18 17"><g fill="none" stroke="#808080" stroke-width="1.1" stroke-linecap="round" stroke-linejoin="round"><path d="M1.2 1 V14.6 Q1.2 15.8 2.4 15.8 H16.8"/><path d="M5 13 V10 M8 13 V8 M11 13 V6 M14 13 V5"/></g></svg>
<svg class="r" style="left:23px;top:752px;" width="21" height="17" viewBox="0 0 21 17"><g fill="none" stroke="#808080" stroke-width="1.1" stroke-linecap="round" stroke-linejoin="round"><rect x="1.2" y="2.2" width="18.1" height="13.6" rx="1.6"/><path d="M1.2 4.3 H19.3"/><circle cx="7.2" cy="8" r="1.6"/><path d="M4.1 13.9 Q7.2 10.2 10.3 13.9"/><path d="M12.2 7.5 H16.8 M12.2 9.5 H16.8 M12.2 11.5 H16.8"/></g></svg>
<div class="r" style="left:-2.5px;top:396px;width:215.5px;height:48.5px;border:5px solid #0b6fd9;box-sizing:border-box"></div>
<div class="r" style="left:0px;top:0px;width:1902px;height:26px;background:#e8e8e8"></div>
<div class="r" style="left:0px;top:25px;width:1902px;height:1px;background:#f4f4f0"></div>
<div class="r" style="left:12.5px;top:4.5px;width:13px;height:13px;background:#fe5f57;border-radius:50%;box-shadow:inset 0 0 0 0.5px #e2463f"></div>
<div class="r" style="left:32.5px;top:4.5px;width:13px;height:13px;background:#febc2e;border-radius:50%;box-shadow:inset 0 0 0 0.5px #e1a116"></div>
<div class="r" style="left:52.5px;top:4.5px;width:13px;height:13px;background:#28c840;border-radius:50%;box-shadow:inset 0 0 0 0.5px #14ae2a"></div>
<div class="r" style="left:0px;top:26px;width:1902px;height:85px;background:#4314d5"></div>
<div class="r" style="left:0px;top:26px;width:1902px;height:1px;background:#3c0ad6"></div>
<svg class="r" style="left:32px;top:52px;" width="34" height="34" viewBox="0 0 34 34"><circle cx="17" cy="17" r="17" fill="#fff"/><g fill="#4314d5"><path d="M16.5 11.5 L11.5 16.5 A4.45 4.45 0 1 1 16.5 11.5 Z"/><path d="M11.5 17.4 L16.5 22.4 A4.45 4.45 0 1 1 11.5 17.4 Z"/><path d="M16.7 11.4 L19.74 8.45 A3.9 3.9 0 1 1 19.74 14.15 Z"/><path d="M16.7 22.5 L19.74 19.65 A3.9 3.9 0 1 1 19.74 25.35 Z"/><circle cx="16.9" cy="16.9" r="1.55"/></g></svg>
<div class="t " style="left:73.5px;top:52.04px;font-size:28.3px;line-height:28.3px;color:#fff;font-weight:400;-webkit-text-stroke:0.9px #fff;letter-spacing:0.3px">circularo</div>
<div class="r" style="left:238px;top:48px;width:570px;height:42px;background:#582fda;border-radius:4px"></div>
<div class="r" style="left:762px;top:48px;width:46px;height:42px;background:#542bd4;border-radius:0 4px 4px 0"></div>
<svg class="r" style="left:254px;top:59px;" width="18" height="18" viewBox="0 0 18 18"><circle cx="7.5" cy="7.5" r="5.6" fill="none" stroke="#cfc2f5" stroke-width="1.1"/><line x1="11.6" y1="11.6" x2="16" y2="16" stroke="#cfc2f5" stroke-width="1.1"/></svg>
<div class="t " style="left:287px;top:62.52px;font-size:12.5px;line-height:12.5px;color:#cdbff4;font-weight:400;">Find in My folders</div>
<svg class="r" style="left:780px;top:65px;" width="10" height="7" viewBox="0 0 10 7"><path d="M0.5 0.8 L9.5 0.8 L5 6.2 Z" fill="#fff"/></svg>
<div class="r" style="left:1552px;top:51px;width:36px;height:36px;background:#582fda;border-radius:50%"></div>
<svg class="r" style="left:1560px;top:58px;" width="19" height="20" viewBox="0 0 19 20"><g fill="none" stroke="#f0eaff" stroke-width="1.2" stroke-linejoin="round" stroke-linecap="round"><path d="M2.6 15 Q1.6 15 2.1 14.1 L3.8 11.3 Q4.3 10.5 4.3 9.5 V7.6 Q4.3 2.8 9.4 2.8 Q14.5 2.8 14.5 7.6 V9.5 Q14.5 10.5 15 11.3 L16.7 14.1 Q17.2 15 16.2 15 Z"/><path d="M9.4 1.3 V2.8"/><path d="M7.7 17.4 Q9.4 18.9 11.1 17.4"/></g></svg>
<div class="r" style="left:1644px;top:51px;width:36px;height:36px;background:#4caf50;border-radius:50%"></div>
<div class="t" style="left:1642.0px;width:40px;text-align:center;top:60.81px;font-size:17px;line-height:17px;color:#fff;font-weight:700;">C</div>
<div class="t " style="left:1688px;top:56.02px;font-size:12.5px;line-height:12.5px;color:#fff;font-weight:400;">Charlie Adams</div>
<div class="t " style="left:1688px;top:69.63px;font-size:12.25px;line-height:12.25px;color:#fff;font-weight:400;">charlie.adams@circularo.com</div>
<svg class="r" style="left:1859px;top:65px;" width="10" height="7" viewBox="0 0 10 7"><path d="M0.5 0.8 L9.5 0.8 L5 6.2 Z" fill="#fff"/></svg>
</body></html>
